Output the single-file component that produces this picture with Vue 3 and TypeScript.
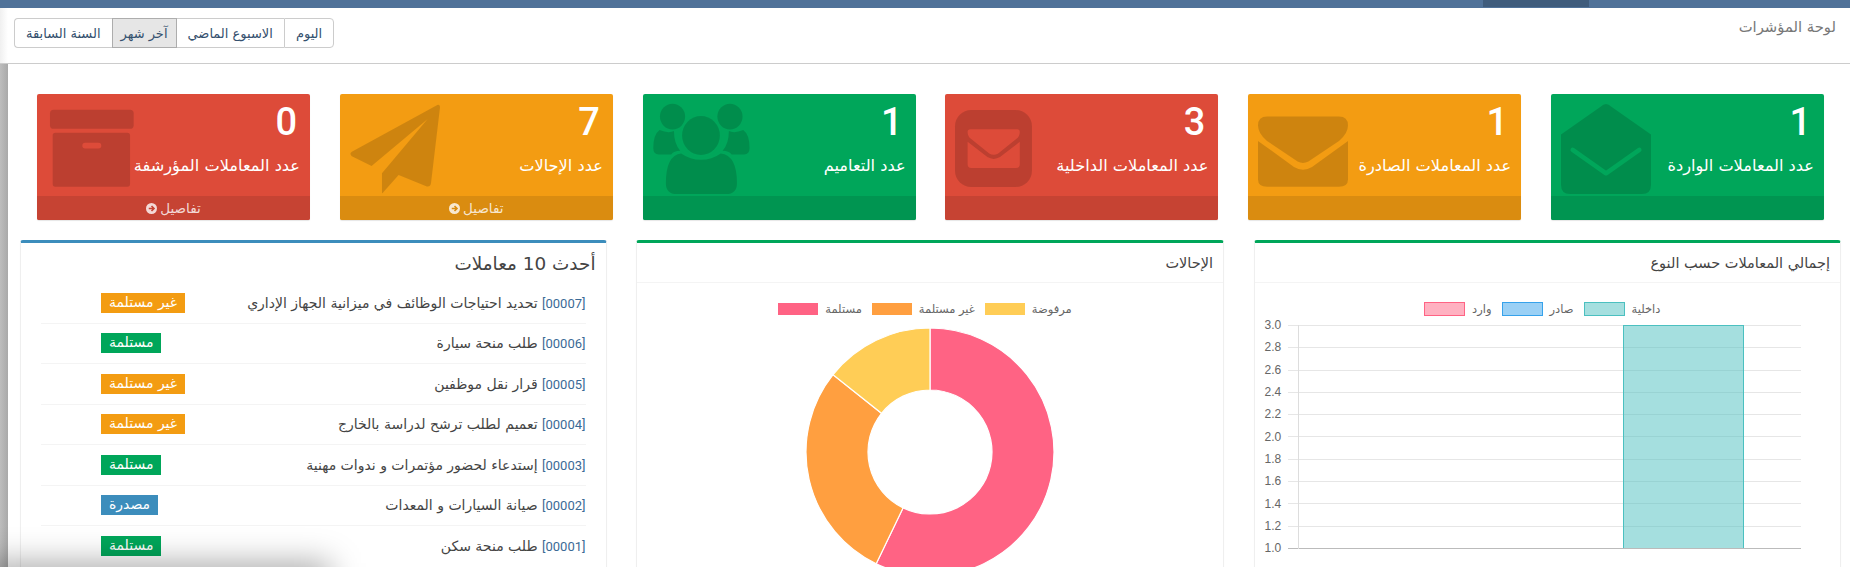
<script setup lang="ts">
import { computed } from 'vue'

type Tone = 'green' | 'orange' | 'red'
type IconName = 'open' | 'mail' | 'square' | 'users' | 'plane' | 'archive'

interface Stat {
  count: number
  label: string
  tone: Tone
  icon: IconName
  details: boolean
}

const stats: Stat[] = [
  { count: 1, label: 'عدد المعاملات الواردة', tone: 'green', icon: 'open', details: false },
  { count: 1, label: 'عدد المعاملات الصادرة', tone: 'orange', icon: 'mail', details: false },
  { count: 3, label: 'عدد المعاملات الداخلية', tone: 'red', icon: 'square', details: false },
  { count: 1, label: 'عدد التعاميم', tone: 'green', icon: 'users', details: false },
  { count: 7, label: 'عدد الإحالات', tone: 'orange', icon: 'plane', details: true },
  { count: 0, label: 'عدد المعاملات المؤرشفة', tone: 'red', icon: 'archive', details: true },
]

const ranges = ['اليوم', 'الاسبوع الماضي', 'آخر شهر', 'السنة السابقة']

const statusTone: Record<string, string> = {
  'غير مستلمة': 'orange',
  'مستلمة': 'green',
  'مصدرة': 'blue',
}

const latest = [
  { code: '00007', title: 'تحديد احتياجات الوظائف في ميزانية الجهاز الإداري', status: 'غير مستلمة' },
  { code: '00006', title: 'طلب منحة سيارة', status: 'مستلمة' },
  { code: '00005', title: 'قرار نقل موظفين', status: 'غير مستلمة' },
  { code: '00004', title: 'تعميم لطلب ترشح لدراسة بالخارج', status: 'غير مستلمة' },
  { code: '00003', title: 'إستدعاء لحضور مؤتمرات و ندوات مهنية', status: 'مستلمة' },
  { code: '00002', title: 'صيانة السيارات و المعدات', status: 'مصدرة' },
  { code: '00001', title: 'طلب منحة سكن', status: 'مستلمة' },
]

// donut: 4 / 2 / 1 from the top going clockwise
const referrals = [
  { label: 'مستلمة', value: 4, color: 'rgb(255, 99, 132)' },
  { label: 'غير مستلمة', value: 2, color: 'rgb(255, 159, 64)' },
  { label: 'مرفوضة', value: 1, color: 'rgb(255, 205, 86)' },
]

const cx = 126
const cy = 126
const outer = 124
const inner = 62

const point = (r: number, turn: number) => {
  const a = turn * Math.PI * 2
  return `${(cx + r * Math.sin(a)).toFixed(2)} ${(cy - r * Math.cos(a)).toFixed(2)}`
}

const slices = computed(() => {
  const total = referrals.reduce((sum, r) => sum + r.value, 0)
  let from = 0
  return referrals.map((r) => {
    const to = from + r.value / total
    const large = to - from > 0.5 ? 1 : 0
    const d = `M${point(outer, from)} A${outer} ${outer} 0 ${large} 1 ${point(outer, to)} L${point(inner, to)} A${inner} ${inner} 0 ${large} 0 ${point(inner, from)} Z`
    from = to
    return { d, color: r.color }
  })
})

const typeLegend = [
  { label: 'وارد', fill: 'rgba(255, 99, 132, 0.5)', line: 'rgb(255, 99, 132)' },
  { label: 'صادر', fill: 'rgba(54, 162, 235, 0.5)', line: 'rgb(54, 162, 235)' },
  { label: 'داخلية', fill: 'rgba(75, 192, 192, 0.5)', line: 'rgb(75, 192, 192)' },
]

const ticks = ['3.0', '2.8', '2.6', '2.4', '2.2', '2.0', '1.8', '1.6', '1.4', '1.2', '1.0']
const tickGap = 22.3
</script>

<template>
  <div class="page" dir="rtl">
    <div class="topbar"><span class="topbar-active"></span></div>

    <header class="page-head">
      <h1>لوحة المؤشرات</h1>
      <div class="range-group">
        <button v-for="r in ranges" :key="r" :class="{ active: r === 'آخر شهر' }">{{ r }}</button>
      </div>
    </header>

    <main class="content">
      <section class="stats">
        <article v-for="s in stats" :key="s.label" class="stat" :class="s.tone">
          <div class="stat-inner">
            <h3>{{ s.count }}</h3>
            <p>{{ s.label }}</p>
          </div>

          <svg class="stat-icon" viewBox="0 0 100 100" aria-hidden="true">
            <g v-if="s.icon === 'open'">
              <path d="M50 0 Q53 0 56 3 L100 34 V90 Q100 100 90 100 H10 Q0 100 0 90 V34 L44 3 Q47 0 50 0 Z" fill="currentColor" />
              <path class="cut" d="M13 51 L50 77 L87 51" />
            </g>
            <g v-else-if="s.icon === 'mail'">
              <path d="M10 14 H90 Q100 14 100 24 Q100 33 90 41 L56 64 Q50 67 44 64 L10 41 Q0 33 0 24 Q0 14 10 14 Z M0 41 L40 70 Q50 76 60 70 L100 41 V84 Q100 92 90 92 H10 Q0 92 0 84 Z" fill="currentColor" />
            </g>
            <g v-else-if="s.icon === 'square'">
              <rect x="0" y="6.700" width="85.500" height="85.500" rx="18" fill="currentColor" />
              <path class="fill-card" d="M17 28 H69 Q72 28 72 31 Q72 36 68 39 L48 55 Q43 58 38 55 L18 39 Q14 36 14 31 Q14 28 17 28 Z M14 42 L36 59 Q43 63 50 59 L72 42 V67 Q72 71 68 71 H18 Q14 71 14 67 Z" />
            </g>
            <g v-else-if="s.icon === 'users'" transform="translate(3.300 0)">
              <ellipse cx="18.400" cy="14" rx="14" ry="14.400" fill="currentColor" />
              <ellipse cx="82.200" cy="14" rx="14" ry="14.400" fill="currentColor" />
              <path d="M4 29 Q14 33 20 30 Q20 44 27 52 Q20 52 17 56 H3 Q-3 56 -3 49 Q-3 34 4 29 Z M97 29 Q87 33 81 30 Q81 44 74 52 Q81 52 84 56 H98 Q104 56 104 49 Q104 34 97 29 Z" fill="currentColor" />
              <path class="ringed" d="M28 55 Q38 62 50 62 Q62 62 72 55 Q90 57 90 88 Q90 100 78 100 H23 Q11 100 11 88 Q11 57 28 55 Z" fill="currentColor" />
              <ellipse class="ringed" cx="50" cy="35" rx="21" ry="21.700" fill="currentColor" />
            </g>
            <g v-else-if="s.icon === 'plane'">
              <path d="M97 1 Q100 0 100 4 L90 88 Q89 93 84 91 L54 79 L37 98 Q35.500 101 35.500 96 V77 L86 17 L24 69 L2 58 Q-1 55 2 53 Z" fill="currentColor" />
            </g>
            <g v-else transform="translate(3.300 0)">
              <rect x="0" y="6.500" width="93" height="21" rx="4" fill="currentColor" />
              <rect x="3" y="32" width="86" height="60" rx="3" fill="currentColor" />
              <rect class="fill-card" x="36" y="43" width="21" height="6.500" rx="3" />
            </g>
          </svg>

          <footer class="stat-foot">
            <template v-if="s.details">
              <span>تفاصيل</span>
              <svg class="go" viewBox="0 0 12 12" aria-hidden="true">
                <circle cx="6" cy="6" r="6" fill="currentColor" />
                <path class="go-arrow" d="M3 6 H8.500 M6 3.300 L8.700 6 L6 8.700" />
              </svg>
            </template>
          </footer>
        </article>
      </section>

      <section class="panels">
        <article class="panel green">
          <div class="panel-head"><h2>إجمالي المعاملات حسب النوع</h2></div>
          <div class="legend" dir="ltr">
            <span v-for="l in typeLegend" :key="l.label" class="legend-item">
              <i class="swatch outlined" :style="{ background: l.fill, borderColor: l.line }"></i>
              <span>{{ l.label }}</span>
            </span>
          </div>
          <div class="bars" dir="ltr">
            <div class="tick-labels">
              <span v-for="t in ticks" :key="t" :style="{ height: tickGap + 'px' }">{{ t }}</span>
            </div>
            <div class="plot">
              <div class="bar"></div>
            </div>
          </div>
        </article>

        <article class="panel green">
          <div class="panel-head"><h2>الإحالات</h2></div>
          <div class="legend" dir="ltr">
            <span v-for="r in referrals" :key="r.label" class="legend-item">
              <i class="swatch" :style="{ background: r.color }"></i>
              <span>{{ r.label }}</span>
            </span>
          </div>
          <svg class="donut" width="252" height="252" viewBox="0 0 252 252">
            <path v-for="(p, i) in slices" :key="i" :d="p.d" :fill="p.color" stroke="#fff" stroke-width="1.200" />
          </svg>
        </article>

        <article class="panel blue">
          <div class="latest-head"><h2>أحدث 10 معاملات</h2></div>
          <ul class="latest">
            <li v-for="item in latest" :key="item.code">
              <a><bdi class="code">[{{ item.code }}]</bdi> {{ item.title }}</a>
              <span class="badge" :class="statusTone[item.status]">{{ item.status }}</span>
            </li>
          </ul>
        </article>
      </section>
    </main>

    <div class="corner-shadow"></div>
  </div>
</template>

<style scoped>
.page {
  position: relative;
  width: 1850px;
  height: 567px;
  overflow: hidden;
  background: #fff;
  font-family: "DejaVu Sans", "Noto Sans", sans-serif;
  color: #333;
}

.topbar {
  height: 8px;
  background: #507299;
}

.topbar-active {
  display: block;
  width: 106px;
  height: 7px;
  margin-right: 261px;
  background: #3f5c7c;
}

.page-head {
  display: flex;
  justify-content: space-between;
  height: 56px;
  padding: 10px 14px 0 14px;
  border-bottom: 1px solid #ccc;
  box-sizing: border-box;
  background: linear-gradient(to right, #f0f0f0 0, #fff 8px);
}

.page-head h1 {
  margin: 0;
  font-size: 14.800px;
  line-height: 18px;
  font-weight: 400;
  color: #777;
}

.range-group {
  display: flex;
  height: 30px;
}

.range-group button {
  height: 30px;
  padding: 0 11px;
  border: 1px solid #ccc;
  border-right-width: 0;
  background: #fff;
  font: inherit;
  font-size: 13px;
  color: #34506e;
}

.range-group button:first-child {
  border-right-width: 1px;
  border-radius: 0 4px 4px 0;
}

.range-group button:last-child {
  border-radius: 4px 0 0 4px;
}

.range-group button.active {
  padding: 0 8px;
  background: #e6e6e6;
  border-color: #adadad;
  border-right-width: 1px;
  margin-right: -1px;
}

.content {
  position: relative;
  height: 503px;
  margin-left: 8px;
  padding: 30px 9px 0 12px;
  box-sizing: border-box;
}

.content::before {
  content: "";
  position: absolute;
  top: 0;
  bottom: 0;
  left: -8px;
  width: 8px;
  background: linear-gradient(to right, #bdbdbd, #a9a9a9);
}

.stats {
  display: grid;
  grid-template-columns: repeat(6, 273px);
  column-gap: 29.800px;
  justify-content: start;
  margin-right: 17px;
}

.stat {
  position: relative;
  height: 126px;
  overflow: hidden;
  border-radius: 2px;
  color: #fff;
  box-shadow: 0 1px 1px rgba(0, 0, 0, 0.1);
}

.stat.green { background: #00a65a; --card: #00a65a; --foot: #009551; }
.stat.orange { background: #f39c12; --card: #f39c12; --foot: #da8c10; }
.stat.red { background: #dd4b39; --card: #dd4b39; --foot: #c64333; }

.stat-inner {
  position: relative;
  z-index: 1;
  height: 102px;
  padding: 7px 10px 0;
  box-sizing: border-box;
}

.stat-inner h3 {
  margin: 0 3px 13px 0;
  font-family: Roboto, sans-serif;
  font-size: 38px;
  line-height: 42px;
  font-weight: 500;
  white-space: nowrap;
}

.stat-inner p {
  margin: 0;
  font-size: 16.200px;
  line-height: 20px;
  white-space: nowrap;
}

.stat-icon {
  position: absolute;
  top: 10px;
  left: 10px;
  width: 90px;
  height: 90px;
  overflow: visible;
  color: rgba(0, 0, 0, 0.15);
}

.cut {
  fill: none;
  stroke: var(--card);
  stroke-width: 5;
  stroke-linecap: round;
  stroke-linejoin: round;
}

.fill-card {
  fill: var(--card);
}

.ringed {
  stroke: var(--card);
  stroke-width: 5;
  paint-order: stroke;
}

.stat-foot {
  position: relative;
  z-index: 1;
  display: flex;
  align-items: center;
  justify-content: center;
  gap: 3px;
  height: 24px;
  background: var(--foot);
  color: rgba(255, 255, 255, 0.8);
  font-size: 13.500px;
}

.go {
  width: 11px;
  height: 11px;
}

.go-arrow {
  fill: none;
  stroke: var(--foot);
  stroke-width: 1.800;
}

.panels {
  display: grid;
  grid-template-columns: 587.500px 588px 586.500px;
  column-gap: 29.500px;
  justify-content: start;
  margin-top: 20px;
}

.panel {
  height: 400px;
  border: 1px solid #efefef;
  border-top: 3px solid;
  border-radius: 3px;
  box-sizing: border-box;
  background: #fff;
  box-shadow: 0 1px 1px rgba(0, 0, 0, 0.06);
}

.panel.green { border-top-color: #00a65a; }
.panel.blue { border-top-color: #3c8dbc; }

.panel-head {
  height: 39px;
  padding: 0 10px;
  border-bottom: 1px solid #f4f4f4;
  display: flex;
  align-items: center;
}

.panel-head h2 {
  margin: 0;
  font-size: 14.500px;
  font-weight: 400;
  color: #444;
}

.legend {
  display: flex;
  justify-content: center;
  height: 14px;
  margin-top: 19px;
  padding-right: 10px;
  font-size: 11.500px;
  color: #666;
}

.legend-item {
  display: flex;
  align-items: center;
  gap: 7px;
  margin: 0 5px;
}

.swatch {
  display: block;
  width: 40px;
  height: 12px;
  box-sizing: border-box;
}

.swatch.outlined {
  width: 41px;
  height: 14px;
  border: 1px solid;
}

.donut {
  display: block;
  margin: 10px auto 0;
}

.bars {
  display: flex;
  align-items: flex-start;
  margin-top: 9px;
  padding-left: 10px;
}

.tick-labels {
  display: flex;
  flex-direction: column;
  width: 23px;
  margin-top: -11px;
  font-family: "Liberation Sans", sans-serif;
  font-size: 12px;
  color: #666;
}

.tick-labels span {
  display: flex;
  align-items: center;
}

.plot {
  position: relative;
  width: 513px;
  height: 224px;
  box-sizing: border-box;
  border-bottom: 1px solid #bbb;
  background-image: repeating-linear-gradient(to bottom, #e6e6e6 0, #e6e6e6 1px, transparent 1px, transparent 22.300px);
}

.plot::before {
  content: "";
  position: absolute;
  top: 0;
  bottom: -1px;
  left: 10px;
  width: 1px;
  background: #ddd;
}

.bar {
  position: absolute;
  top: 0;
  bottom: 0;
  left: 335px;
  width: 121px;
  box-sizing: border-box;
  background: rgba(75, 192, 192, 0.5);
  border: 1.500px solid rgb(75, 192, 192);
  border-bottom: 0;
}

.latest-head {
  height: 40px;
  padding: 0 10px;
  display: flex;
  align-items: center;
}

.latest-head h2 {
  margin: 0;
  font-size: 18.400px;
  font-weight: 400;
  color: #444;
}

.latest {
  list-style: none;
  margin: 0 20px;
  padding: 0;
}

.latest li {
  display: flex;
  justify-content: space-between;
  align-items: center;
  height: 40.500px;
  box-sizing: border-box;
  border-bottom: 1px solid #f4f4f4;
  padding-left: 60px;
  font-size: 14px;
}

.latest li:last-child {
  border-bottom: 0;
}

.latest a {
  color: #444;
}

.code {
  color: #3a6a96;
  font-family: Roboto, sans-serif;
  font-size: 13px;
}

.badge {
  height: 20px;
  line-height: 18px;
  padding: 0 8px;
  color: #fff;
  font-size: 14px;
  white-space: nowrap;
}

.badge.orange { background: #f39c12; }
.badge.green { background: #00a65a; }
.badge.blue { background: #3c8dbc; }

.corner-shadow {
  position: absolute;
  left: -20px;
  bottom: -30px;
  width: 350px;
  height: 34px;
  background: rgba(0, 0, 0, 0.35);
  filter: blur(16px);
}
</style>

<style>
html, body {
  margin: 0;
  background: #fff;
}
</style>
